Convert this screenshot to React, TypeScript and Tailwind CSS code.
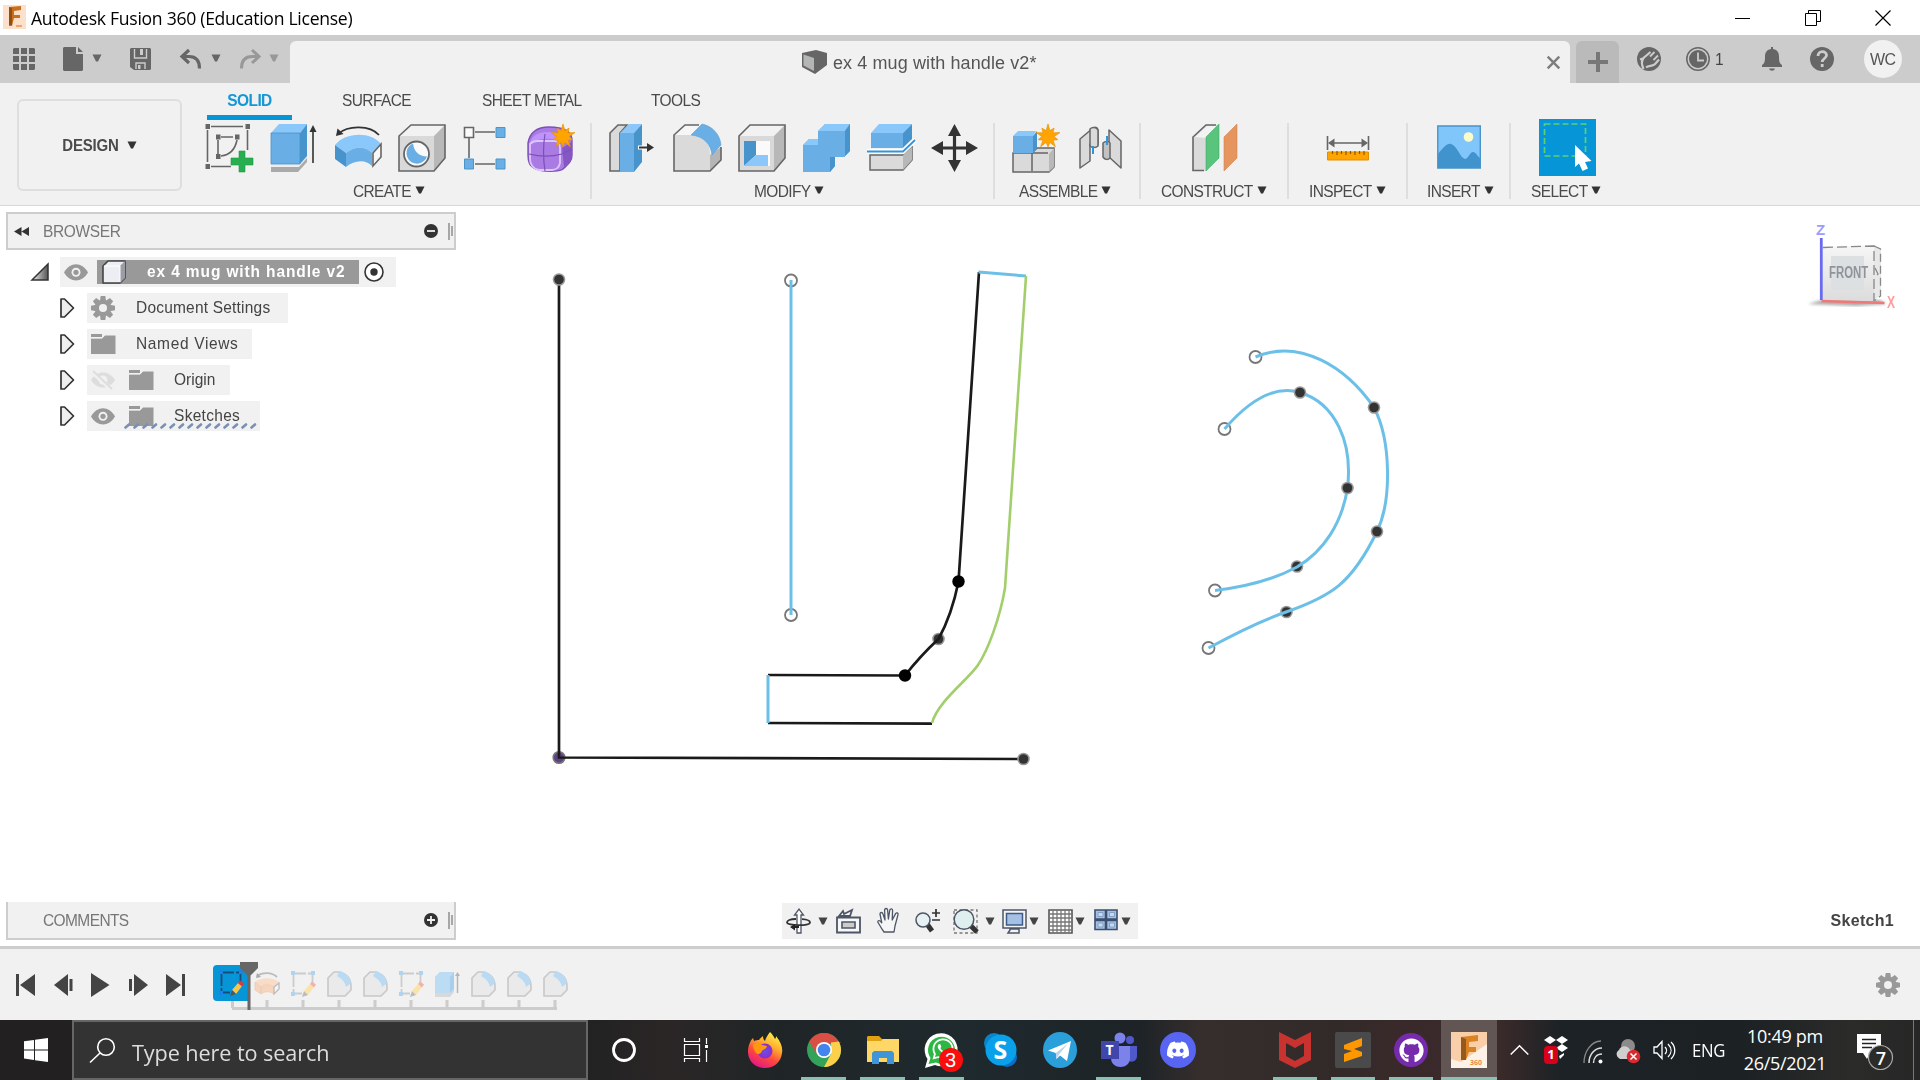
import React from "react";
import { FaDiscord, FaGithub, FaWhatsapp } from "react-icons/fa";

const B1 = "#69afe5";
const B2 = "#8ac7fa";
const B3 = "#4794cd";
const G = "#666";

type IconProps = { children: React.ReactNode; w?: number; h?: number; vb?: string; className?: string };

function Icon({ children, w = 48, h = 48, vb, className = "" }: IconProps) {
  return (
    <svg width={w} height={h} viewBox={vb ?? `0 0 ${w} ${h}`} fill="none" className={`block shrink-0 overflow-visible ${className}`}>
      {children}
    </svg>
  );
}

function Caret({ className = "text-[#333]" }: { className?: string }) {
  return (
    <svg width="10" height="8" viewBox="0 0 10 8" className={`block shrink-0 ${className}`}>
      <path d="M.5 .5h9L6 7.500H4z" fill="currentColor" />
    </svg>
  );
}

const Star = () => (
  <polygon
    transform="translate(36 12.5)"
    points={Array.from({ length: 20 }, (_, i) => {
      const r = i % 2 ? 6.2 : i % 4 ? 10.4 : 12.6;
      const a = (i * Math.PI) / 10 - Math.PI / 2;
      return `${(r * Math.cos(a)).toFixed(2)},${(r * Math.sin(a)).toFixed(2)}`;
    }).join(" ")}
    fill="#ffa400"
    stroke="#e08f00"
    strokeWidth=".6"
  />
);

const IconSketch = () => (
  <Icon>
    <g stroke={G} strokeWidth="1.6">
      <path d="M6 2.5h32M2.5 6v32M42.500 6v20M6 42.500h20M16 13h12M13 16v14M32 16c-2 10-7 15-16 16" />
    </g>
    <g fill={G}>
      <path d="M.5 0h4.500v5H.5zM40.500 0H45v5h-4.500zM.5 40H5v5H.5zM11 10.500h4.500v5H11zM30 10.500h4.500v5H30zM11 30h4.500v5H11z" />
    </g>
    <path d="M34 27h6v7h8v7h-8v7h-6v-7h-8v-7h8z" fill="#27ae50" stroke="#1e9a43" strokeWidth=".6" />
  </Icon>
);
const IconExtrude = () => (
  <Icon>
    <path d="M2 41h29l7-9v6l-9 10H2z" fill="#aaa" />
    <path d="M2 40h29l7-8v2L30 43H2z" fill="#eee" />
    <path d="M2 9L10 0h28l-7 9z" fill={B2} />
    <path d="M2 9h29v31H2z" fill={B1} stroke="#4c93ca" strokeWidth=".8" />
    <path d="M31 9l7-9v32l-7 8z" fill={B3} />
    <path d="M44 6v33" stroke="#333" strokeWidth="1.600" />
    <path d="M44 1l3.500 7h-7z" fill="#333" />
  </Icon>
);
const IconRevolve = () => (
  <Icon>
    <path d="M4 10C14 1 36 1 45 11" stroke="#333" strokeWidth="1.800" />
    <path d="M2 12l1.500-7.500 6 5.500z" fill="#333" />
    <path d="M1 21c10-13 36-14 46-1l-9 9c-6-7-18-7-26 0z" fill={B2} />
    <path d="M12 29c8-7 20-7 26 0v13c-6-7-18-6-26 1z" fill={B1} />
    <path d="M1 21l11 8v14L1 35z" fill={B3} />
    <path d="M39 29l8-9v13l-8 9z" fill="#f8f8f8" stroke={G} strokeWidth="1.600" />
  </Icon>
);
const IconHole = () => (
  <Icon>
    <path d="M1 12L13 1h34L36 12z" fill="#f2f2f2" />
    <path d="M36 12L47 1v33L36 47z" fill="#b8b8b8" />
    <path d="M1 12h35v35H1z" fill="#d9d9d9" />
    <path d="M1 12L13 1h34v33L36 47H1z" stroke={G} strokeWidth="1.600" />
    <circle cx="18.500" cy="30" r="12.500" fill="#fafafa" stroke={G} strokeWidth="1.800" />
    <path d="M15 19.500a10.500 10.500 0 1 0 14 13c-8 0-13-5-14-13z" fill={B1} />
  </Icon>
);
const IconPattern = () => (
  <Icon>
    <path d="M12 8h20M6 14v20M12 40h20" stroke={G} strokeWidth="1.600" />
    <path d="M1.500 3.500h9v10h-9z" fill="#fafafa" stroke={G} strokeWidth="1.600" />
    <path d="M33 3.500h9v10h-9zM1.500 35h9v10h-9zM33 35h9v10h-9z" fill={B1} stroke="#4c93ca" />
  </Icon>
);
const IconForm = () => (
  <Icon>
    <path d="M1 19C3 8 11 3 22 3c14 0 23 4 23 14v14c0 7-5 10-9 14-3 3-22 3-27 0-7-3-8-8-8-14z" fill="#a97be3" stroke="#7d50b8" strokeWidth="1.400" />
    <path d="M3 19c2-8 9-11 19-11 6 0 9 1 10 8-9-2-18-2-27 2z" fill="#bf93ff" />
    <path d="M3 20c3-3 5-3 7-3h18c4 0 5 3 5 7v15c-1 5-5 7-8 7H12c-6-1-9-6-9-11z" stroke="#dcc6ff" strokeWidth="1.800" />
    <path d="M35 24l10-6v13c0 6-4 8-8 12z" fill="#8657c4" />
    <path d="M18 10c-2 12-2 24 0 37M2 30c12 3 22 3 33 0l10-5" stroke="#7d50b8" strokeWidth="1.200" />
    <Star />
  </Icon>
);
const IconPress = () => (
  <Icon>
    <path d="M1 9L9 1h9l-7 8v38H1z" fill="#dadada" stroke={G} strokeWidth="1.600" />
    <path d="M11 9l9-9h13l-8 9z" fill={B2} />
    <path d="M11 9h14v39H11z" fill={B1} />
    <path d="M25 9l8-9v38l-8 10z" fill={B3} />
    <path d="M29 23.500h9" stroke="#fff" strokeWidth="4" />
    <path d="M30 23.500h9" stroke="#333" strokeWidth="2" />
    <path d="M38 19l7 4.500-7 4.500z" fill="#333" />
  </Icon>
);
const IconFillet = () => (
  <Icon>
    <path d="M1 11L12 1h15l-8 10z" fill="#f6f6f6" />
    <path d="M1 11h18c12 1 18 8 18 20v16H1z" fill="#dadada" />
    <path d="M37 31l11-8v13L37 47z" fill="#b5b5b5" />
    <path d="M26 1H12L1 11v36h36l11-11V23" stroke={G} strokeWidth="1.600" />
    <path d="M29 0c10 2 18 10 19 21l-9 10c-1-11-9-19-21-20z" fill={B1} stroke="#5aa0d6" strokeWidth=".6" />
  </Icon>
);
const IconShell = () => (
  <Icon>
    <path d="M1 12L12 1h35L36 12z" fill="#f2f2f2" />
    <path d="M36 12L47 1v33L36 47z" fill="#b8b8b8" />
    <path d="M1 12h35v35H1z" fill="#d9d9d9" />
    <path d="M1 12L12 1h35v33L36 47H1z" stroke={G} strokeWidth="1.600" />
    <path d="M6 17h26v25H6z" fill="#fafafa" />
    <path d="M6 17h12v14L6 42z" fill={B3} />
    <path d="M18 31h12v11H6z" fill={B2} />
  </Icon>
);
const IconCombine = () => (
  <Icon>
    <path d="M1 21l6-6h9V7l7-7h25v27l-6 6h-9v9l-5 6H1z" fill={B1} />
    <path d="M16 7l7-7h25l-5 7zM1 21l6-6h9v6z" fill={B2} />
    <path d="M43 7l5-7v27l-6 6h-9v9l-5 6V33h15z" fill={B3} />
  </Icon>
);
const IconSplit = () => (
  <Icon>
    <path d="M4 9l8-9h33l-9 9z" fill={B2} />
    <path d="M4 9h32v15H4z" fill={B1} />
    <path d="M36 9l9-9v15l-9 9z" fill={B3} />
    <path d="M3 31h33l9-8v13l-9 10H3z" fill="#dadada" stroke={G} strokeWidth="1.500" />
    <path d="M36 31l9-8v13l-9 10z" fill="#b8b8b8" />
    <path d="M0 27.500h36L48 16" stroke="#fff" strokeWidth="5" />
    <path d="M0 27.500h36L48 16" stroke="#2f95dc" strokeWidth="1.800" />
  </Icon>
);
const IconMove = () => (
  <Icon>
    <path d="M23.500 8v32M8 24h32" stroke="#333" strokeWidth="3.200" />
    <path d="M23.500 0l6.500 12H17zM23.500 48L30 36H17zM0 24l12-7v14zM47 24l-12-7v14z" fill="#333" />
  </Icon>
);
const IconNewComponent = () => (
  <Icon>
    <path d="M1 29h19l5-5h17v19l-5 5H1z" fill="#dadada" stroke={G} strokeWidth="1.500" />
    <path d="M37 30l5-6v19l-5 5z" fill="#b8b8b8" />
    <path d="M20 29v18M20 29h16" stroke={G} strokeWidth="1.500" />
    <path d="M1 12l5-5h18l-3 5z" fill={B2} />
    <path d="M1 12h20v17H1z" fill={B1} />
    <path d="M21 12l4-5v17l-4 5z" fill={B3} />
    <Star />
  </Icon>
);
const IconJoint = () => (
  <Icon className="ml-px">
    <g stroke={G} strokeWidth="1.500" strokeLinejoin="round">
      <path d="M3 15L16 4c3-2 5 0 5 3v13c0 3-8 3-8 0v17L3 44z" fill="#dadada" />
      <path d="M13 5v17c2 2 6 2 8 0V6c-2-3-6-3-8-1z" fill="#dadada" />
      <path d="M32 6l12 11v27L32 33z" fill="#dadada" />
      <path d="M26 19c2-2 6-2 7 0v15c-2 2-5 2-7-1z" fill="#c2c2c2" />
    </g>
    <path d="M16 22v8M30 12v9" stroke="#2f95dc" strokeWidth="2" />
  </Icon>
);
const IconConstruct = () => (
  <Icon>
    <path d="M1 13L14 1h11v4L14 15v32H1z" fill="#dadada" />
    <path d="M14 14L25 2H15L3 13z" fill="#f3f3f3" />
    <path d="M12 46.500H1V13L14 1h10" stroke={G} strokeWidth="1.600" />
    <path d="M14 13L27 0v34L14 47z" fill="#58c47c" stroke="#46ab69" strokeWidth=".6" />
    <path d="M32 13L45 0v34L32 47z" fill="#e6955f" stroke="#cf8350" strokeWidth=".6" />
  </Icon>
);
const IconInspect = () => (
  <Icon className="-ml-px">
    <path d="M3.500 12v14M44.500 12v14M8 19h32" stroke={G} strokeWidth="1.600" />
    <path d="M4 19l6.500-4.500v9zM44 19l-6.500-4.500v9z" fill={G} />
    <path d="M3.500 28h41v8h-41z" fill="#ffa400" stroke="#e08f00" />
    <path d="M8.500 27v3M13 27v4M17.500 27v3M22 27v4M26.500 27v3M31 27v4M35.500 27v3M40 27v4" stroke="#8a5a00" strokeWidth="1.200" />
  </Icon>
);
const IconInsert = () => (
  <Icon>
    <path d="M2.500 2h43v42h-43z" fill="#80c6fb" />
    <path d="M3 30C8 24 12 19 16 20c6 1 9 14 14 15 3 0 5-7 8-7s4 4 7 6v10H3z" fill="#4093cd" />
    <circle cx="33.500" cy="13" r="4.800" fill="#fdfcc8" />
    <path d="M2.800 2h42.500v42H2.800z" stroke="#4a93c8" strokeWidth="1.400" />
  </Icon>
);

const IconSelect = () => (
  <Icon w={57} h={57}>
    <path d="M0 0h57v57H0z" fill="#0696d7" />
    <path d="M5.500 5h41v32h-41z" stroke="#61cf73" strokeWidth="1.700" strokeDasharray="6 3" />
    <path d="M36 26v22l4-3.500 3.500 7.500 5.500-2.500-3-6.500 6.500-1z" fill="#fff" />
  </Icon>
);

type SectionProps = { label: string; w: string; iconPad: string; labelPad: string; sep?: boolean; children: React.ReactNode };
function Section({ label, w, iconPad, labelPad, sep = true, children }: SectionProps) {
  return (
    <div className={`flex h-[76px] shrink-0 flex-col justify-between ${w} ${sep ? "border-l-2 border-[#dedede]" : ""}`}>
      <div className={`flex h-[49px] items-end gap-[16.4px] ${iconPad}`}>{children}</div>
      <div className={`flex h-4 items-center gap-[4px] whitespace-nowrap text-[15.5px] leading-4 tracking-[-0.64px] text-[#4a4a4a] ${labelPad}`}>
        <span className="mt-px scale-y-[1.1]">{label}</span>
        <Caret className="-mt-[2px] text-[#333]" />
      </div>
    </div>
  );
}

function TitleBar() {
  return (
    <div className="flex h-[35px] shrink-0 items-center bg-white pl-[3px] text-black">
      <Icon w={23} h={24} className="-mt-px">
        <path d="M0 0h23v24H0z" fill="#fbe1cc" />
        <path d="M6 2l12-1v4l-7 1v4h6v3h-6l-2 8H6z" fill="#c96f1b" />
        <path d="M6 2l3 1v17H6z" fill="#8f4f16" />
        <path d="M13 20h6v2h-6z" fill="#f2a56a" />
      </Icon>
      <span className="ml-[5px] mt-px w-[330px] origin-left scale-x-[0.978] whitespace-nowrap font-['Open_Sans',sans-serif] text-[18px] leading-6 tracking-[-0.3px]">
        Autodesk Fusion 360 (Education License)
      </span>
      <div className="ml-auto flex items-center gap-[54px] pr-[29px]">
        <Icon w={16} h={16}><path d="M0 8.500h15" stroke="#000" /></Icon>
        <Icon w={16} h={16}><path d="M.5 3.500h11v12h-11zM3.500 3.500v-3h12v11h-4" stroke="#000" /></Icon>
        <Icon w={16} h={16}><path d="M.5.5l15 15M15.500.5l-15 15" stroke="#000" strokeWidth="1.200" /></Icon>
      </div>
    </div>
  );
}

function TabBar() {
  return (
    <div className="flex h-12 shrink-0 items-end bg-[#ccc]">
      <div className="flex h-12 w-[290px] items-center pl-[13px]">
        <Icon w={22} h={22}>
          <path d="M1 0h5v6H0V1zM8 0h6v6H8zM16 0h5l1 1v5h-6zM0 8h6v6H0zM8 8h6v6H8zM16 8h6v6h-6zM0 16h6v6H1l-1-1zM8 16h6v6H8zM16 16h6v5l-1 1h-5z" fill={G} />
        </Icon>
        <Icon w={20} h={24} className="ml-7">
          <path d="M1 0h12v7h7v16l-1 1H1l-1-1V1zM15 0l5 5h-5z" fill={G} />
        </Icon>
        <Caret className="-mt-[2px] ml-[9px] text-[#666]" />
        <Icon w={21} h={22} className="ml-7">
          <path d="M1 0h19l1 1v20l-1 1H4l-4-3V1z" fill={G} />
          <path d="M4.500 1v9h12V1M6 21v-6h9v6" stroke="#ccc" strokeWidth="1.400" />
          <path d="M10 1h3v6h-3zM8 17h2.500v4H8z" fill="#ccc" />
        </Icon>
        <Icon w={20} h={20} className="ml-[30px]">
          <path d="M8 1L1 7.500 8 14M1.500 7.500H8c7 0 10.500 4 10.500 12" stroke={G} strokeWidth="3.200" />
        </Icon>
        <Caret className="-mt-[2px] ml-[10px] text-[#666]" />
        <Icon w={20} h={20} className="ml-[19px]">
          <path d="M12 1l7 6.500-7 6.500M18.500 7.500H12c-7 0-10.500 4-10.500 12" stroke="#989898" strokeWidth="3" />
        </Icon>
        <Caret className="-mt-[2px] ml-[9px] text-[#989898]" />
      </div>
      <div className="flex h-[42px] w-[1280px] items-center rounded-t-md bg-[#f1f1f1] pl-[512px]">
        <Icon w={25} h={24} className="-mt-[1px]">
          <path d="M0 3L14 0l11 3v12l-12 9L0 17z" fill="#666" />
          <path d="M1.500 4.500L12 8v13L1.500 15.500z" fill="#b4b6b5" />
        </Icon>
        <span className="ml-[6px] mt-[2px] scale-y-[1.05] whitespace-nowrap text-[18px] tracking-[0.1px] text-[#555]">ex 4 mug with handle v2*</span>
        <Icon w={13} h={13} className="ml-auto mr-[10px]"><path d="M.7.7l11.600 11.600M12.300.7L.7 12.300" stroke="#7d7d7d" strokeWidth="2.400" /></Icon>
      </div>
      <div className="ml-[6px] flex h-[42px] w-[43px] items-center justify-center rounded-t-md bg-[#bababa]">
        <Icon w={20} h={20}><path d="M10 0v20M0 10h20" stroke="#777" strokeWidth="4" /></Icon>
      </div>
      <div className="flex h-12 flex-1 items-center pl-[18px]">
        <Icon w={24} h={24}>
          <circle cx="12" cy="12" r="12" fill={G} />
          <path d="M6.500 22c-2-5-2.500-8 .5-11.500l3-2.500 3.500-3M3 12.500l4-1.500M9 20.500c3-2.500 7.500-.5 10-4.500l3-3.500" stroke="#ccc" strokeWidth="2.200" />
          <path d="M13 9.500l4.500-4.500M16.500 13l4.500-4.500" stroke="#ccc" strokeWidth="1.800" />
        </Icon>
        <Icon w={24} h={24} className="ml-[25px]">
          <circle cx="12" cy="12" r="11.200" stroke={G} strokeWidth="1.500" />
          <circle cx="12" cy="12" r="9" fill={G} />
          <path d="M12 5.500v8h6" stroke="#ccc" strokeWidth="1.800" />
        </Icon>
        <span className="ml-[5px] mt-px scale-y-[1.08] text-[15.500px] text-[#444]">1</span>
        <Icon w={20} h={24} className="ml-[38px]">
          <path d="M9 0h2v2c5 1 6 4 6 8 0 5 1 7 3 8v2H0v-2c2-1 3-3 3-8 0-4 1-7 6-8zM7 21.500h6c-1 3-5 3-6 0z" fill={G} />
        </Icon>
        <Icon w={24} h={24} className="ml-7">
          <circle cx="12" cy="12" r="12" fill={G} />
          <path d="M8 9c0-6 8.500-5.500 8.500-.8 0 3.300-4.300 3.300-4.300 6.800M12.200 17v3" stroke="#ccc" strokeWidth="2.800" />
        </Icon>
        <div className="ml-[30px] flex size-[38px] items-center justify-center rounded-full bg-[#f1f1f1] pt-px text-[16px] tracking-[-0.7px] text-[#555]">
          <span className="scale-y-[1.06]">WC</span>
        </div>
      </div>
    </div>
  );
}

function Ribbon() {
  return (
    <div className="flex h-[123px] shrink-0 border-b border-[#d8d8d8] bg-[#f1f1f1]">
      <div className="w-[190px] pl-[17px] pt-4">
        <div className="flex h-[92px] w-[165px] items-center justify-center gap-2 rounded-md border-2 border-[#dedede] text-[15px] font-bold tracking-[-0.2px] text-[#4a4a4a]">
          <span className="scale-y-[1.12]">DESIGN</span>
          <Caret className="text-[#333]" />
        </div>
      </div>
      <div className="flex flex-1 flex-col">
        <div className="flex h-10 text-[15.500px] leading-[34px] tracking-[-0.6px] text-[#4a4a4a]">
          <div className="ml-[17px] h-[37px] w-[85px] border-b-[5px] border-[#0696d7] text-center font-bold text-[#1597d6]">
            <span className="inline-block scale-y-[1.1] leading-[32px]">SOLID</span>
          </div>
          <span className="ml-[50px] h-[34px] w-[140px] scale-y-[1.1]">SURFACE</span>
          <span className="h-[34px] w-[169px] scale-y-[1.1]">SHEET METAL</span>
          <span className="h-[34px] scale-y-[1.1]">TOOLS</span>
        </div>
        <div className="flex">
          <Section label="CREATE" w="w-[400px]" iconPad="pl-[15px]" labelPad="pl-[163px]" sep={false}>
            <IconSketch /><IconExtrude /><IconRevolve /><IconHole /><IconPattern /><IconForm />
          </Section>
          <Section label="MODIFY" w="w-[403px]" iconPad="pl-[17px]" labelPad="pl-[162px]">
            <IconPress /><IconFillet /><IconShell /><IconCombine /><IconSplit /><IconMove />
          </Section>
          <Section label="ASSEMBLE" w="w-[146px]" iconPad="pl-[17px]" labelPad="pl-[24px]">
            <IconNewComponent /><IconJoint />
          </Section>
          <Section label="CONSTRUCT" w="w-[148px]" iconPad="pl-[51px]" labelPad="pl-[20px]"><IconConstruct /></Section>
          <Section label="INSPECT" w="w-[119px]" iconPad="pl-[36px]" labelPad="pl-[20px]"><IconInspect /></Section>
          <Section label="INSERT" w="w-[103px]" iconPad="pl-[27px]" labelPad="pl-[19px]"><IconInsert /></Section>
          <Section label="SELECT" w="w-[120px]" iconPad="pl-[28px]" labelPad="pl-[20px]">
            <div className="-mb-1"><IconSelect /></div>
          </Section>
        </div>
      </div>
    </div>
  );
}

const Eye = () => (
  <Icon w={24} h={17}>
    <path d="M0 8.500C6-2.500 18-2.500 24 8.500 18 19 6 19 0 8.500z" fill="#999" />
    <circle cx="12" cy="8.300" r="4.500" fill="#f1f1f1" />
    <circle cx="12" cy="8.300" r="2.600" fill="#999" />
  </Icon>
);
const EyeOff = () => (
  <Icon w={24} h={20}>
    <path d="M0 10C6 0 18 0 24 10 18 20 6 20 0 10z" fill="#ddd" />
    <circle cx="12" cy="10" r="4.500" fill="#f1f1f1" />
    <path d="M0 1l22 20" stroke="#f1f1f1" strokeWidth="4" />
    <path d="M2 1l19 18" stroke="#ddd" strokeWidth="1.800" />
  </Icon>
);
const Folder = () => (
  <Icon w={25} h={20}>
    <path d="M0 0h11v3H0zM0 4.500h11l3-3h10.500V20H0z" fill="#999" />
    <path d="M0 3.800h11l2.500-2.500" stroke="#f1f1f1" strokeWidth="1" />
  </Icon>
);
function Gear({ r = 12 }: { r?: number }) {
  return (
    <svg width={r * 2} height={r * 2} viewBox="-12 -12 24 24" className="block shrink-0">
      {[0, 45, 90, 135].map((a) => (
        <path key={a} d="M-2.300-12h4.600l.6 4v16l-.6 4h-4.600l-.6-4v-16z" transform={`rotate(${a})`} fill="#999" />
      ))}
      <circle r="8.200" fill="#999" />
      <circle r="4" fill="#f1f1f1" />
    </svg>
  );
}
const Expand = () => (
  <Icon w={15} h={20}><path d="M1 1h3.500l9 9-9 9H1z" fill="#eee" stroke="#333" strokeWidth="1.700" strokeLinejoin="round" /></Icon>
);

function TreeRow({ w, children }: { w: string; children: React.ReactNode }) {
  return (
    <div className="flex h-9 items-center pl-[54px]">
      <Expand />
      <div className={`relative ml-[12px] flex h-[30px] items-center bg-[#f1f1f1] pl-1 ${w}`}>{children}</div>
    </div>
  );
}

function PanelBar({ title, plus }: { title: string; plus?: boolean }) {
  return (
    <div className={`flex h-[38px] w-[450px] items-center border-2 border-[#cdcdcd] bg-[#f1f1f1] pl-[6px] ${plus ? "border-t-0" : ""}`}>
      <Icon w={15} h={9} className="mt-px">
        {!plus && <path d="M7.500 0v9L0 4.500zM15 0v9L7.500 4.500z" fill="#333" />}
      </Icon>
      <span className={`ml-[14px] mr-auto scale-y-[1.1] text-[15.500px] text-[#777] ${plus ? "tracking-[-0.6px]" : "tracking-[-0.35px]"}`}>{title}</span>
      <Icon w={14} h={14}>
        <circle cx="7" cy="7" r="7" fill="#333" />
        <path d={plus ? "M3 7h8M7 3v8" : "M3 7h8"} stroke="#f1f1f1" strokeWidth="1.800" />
      </Icon>
      <Icon w={5} h={17} className="ml-[10px] mr-[1px]"><path d="M1 0v17M4 3v10" stroke="#888" strokeWidth="1.400" /></Icon>
    </div>
  );
}

function Browser() {
  return (
    <div className="flex w-[462px] flex-col pl-[6px] pt-[6px] text-[15.500px] text-[#444]">
      <PanelBar title="BROWSER" />
      <div className="mt-[7px] flex h-[30px] items-center pl-[25px]">
        <Icon w={18} h={18}>
          <defs><linearGradient id="tri" x1="0" y1="1" x2="1" y2="1"><stop stopColor="#eee" /><stop offset="1" stopColor="#555" /></linearGradient></defs>
          <path d="M1 17L17 1v16z" fill="url(#tri)" stroke="#333" strokeWidth="1.500" />
        </Icon>
        <div className="ml-[11px] flex h-[30px] w-[336px] items-center bg-[#f1f1f1] pl-[4px]">
          <Eye />
          <div className="ml-[9px] flex h-6 w-[262px] items-center bg-[#999] pl-[5px]">
            <Icon w={24} h={24}>
              <path d="M1 6l5-5h17v17l-5 5H1z" fill="#eceef3" stroke="#444" strokeWidth="1.600" strokeLinejoin="round" />
              <path d="M18 6l5-5v17l-5 5z" fill="#9a9ca6" />
              <path d="M2 6h16v16" stroke="#fff" />
            </Icon>
            <span className="ml-[21px] scale-y-[1.06] whitespace-nowrap font-bold tracking-[0.88px] text-white">ex 4 mug with handle v2</span>
          </div>
          <Icon w={20} h={20} className="ml-[5px]">
            <circle cx="10" cy="10" r="9" fill="#fff" stroke="#333" strokeWidth="1.600" />
            <circle cx="10" cy="10" r="3.700" fill="#333" />
          </Icon>
        </div>
      </div>
      <div className="mt-[3px] flex flex-col">
        <TreeRow w="w-[201px]"><Gear /><span className="ml-[21px] scale-y-[1.08] tracking-[0.2px]">Document Settings</span></TreeRow>
        <TreeRow w="w-[165px]"><Folder /><span className="ml-[20px] scale-y-[1.08] tracking-[0.65px]">Named Views</span></TreeRow>
        <TreeRow w="w-[143px]"><EyeOff /><div className="ml-[14px]"><Folder /></div><span className="ml-[20px] scale-y-[1.08]">Origin</span></TreeRow>
        <TreeRow w="w-[173px]">
          <Eye /><div className="ml-[14px]"><Folder /></div><span className="ml-[20px] scale-y-[1.08] tracking-[0.3px]">Sketches</span>
          <svg width="134" height="7" className="absolute left-[37px] top-[21px]">
            {Array.from({ length: 15 }, (_, i) => (
              <path key={i} d={`M${i * 9 + 1.5} 5.500l3.500-3`} stroke="#7990b5" strokeWidth="2.600" strokeLinecap="round" />
            ))}
          </svg>
        </TreeRow>
      </div>
    </div>
  );
}

const OPEN: number[][] = [[791, 280.5], [791, 615], [1255.500, 357], [1224.500, 429], [1215, 590.5], [1208.500, 648]];
const UNDER: number[][] = [[1297, 566.5], [1286.500, 612], [938.5, 639]];
const OVER: number[][] = [[559, 279.500], [1023.500, 759], [1300, 392.5], [1374, 407.5], [1347.500, 488], [1377, 531.5]];
const SOLID: number[][] = [[958.500, 581.5], [905, 675.5]];

const Dot = ({ x, y }: { x: number; y: number }) => (
  <g>
    <circle cx={x} cy={y} r="6.300" fill="#999" />
    <circle cx={x} cy={y} r="4.800" fill="#333" />
  </g>
);

function Drawing() {
  return (
    <svg width="1920" height="740" viewBox="0 206 1920 740" fill="none" className="absolute inset-0">
      {OPEN.map(([x, y]) => <circle key={`${x}-${y}`} cx={x} cy={y} r="6" fill="#fff" stroke="#777" strokeWidth="1.800" />)}
      {UNDER.map(([x, y]) => <Dot key={x} x={x} y={y} />)}
      <g stroke="#1a1a1a" strokeWidth="2.700">
        <circle cx="559" cy="757.500" r="5.800" fill="#5c4384" stroke="#777" strokeWidth="1.600" />
        <path d="M559 280v477.500L1023 759M979 272l-20.500 309.500c-4 20-12 43-20 57.500-13 12-23 23-33.500 36.500L768 675M768 723l164 .7" />
      </g>
      <g stroke="#6cc0e8" strokeWidth="3">
        <path d="M791 280v335M768 675v48M978.500 272l47.500 4" />
        <path d="M1255.500 357C1300 338 1346 367 1374 407.500C1391 440 1392 500 1377 531.500C1352 583 1332 596 1286 612C1260 621 1236 633 1208.500 648" />
        <path d="M1224.500 429C1246 404 1272 384 1300 392.500C1335 403 1353 442 1347.500 488C1342 523 1324 551 1297 567C1273 580 1244 587 1215 590.500" />
      </g>
      <path d="M1026 276l-21 312C1000 618 988 650 978 665C968 680 938 701 932 723" stroke="#a3ce6c" strokeWidth="2.600" />
      {OVER.map(([x, y]) => <Dot key={x} x={x} y={y} />)}
      {SOLID.map(([x, y]) => <circle key={x} cx={x} cy={y} r="6.200" fill="#000" />)}
    </svg>
  );
}

function ViewCube() {
  return (
    <div className="absolute left-[1805px] top-[14px] h-[100px] w-[95px]">
      <svg width="95" height="100" viewBox="1805 220 95 100" fill="none" className="absolute inset-0">
        <defs>
          <linearGradient id="face" x1="0" y1="0" x2="0" y2="1"><stop stopColor="#f6f6f6" /><stop offset="1" stopColor="#dcdcdc" /></linearGradient>
          <filter id="soft"><feGaussianBlur stdDeviation="1.500" /></filter>
        </defs>
        <path d="M1808 304l14-4h58l6 4-30 2z" fill="#aaa" filter="url(#soft)" />
        <path d="M1822 247l52-2v56l-52-1z" fill="url(#face)" />
        <path d="M1874 245l7 4v46l-7 6z" fill="#e8e8e8" />
        <path d="M1831 256h33v34h-33z" fill="#dde0e3" />
        <path d="M1823 247.500l51-1.500v55" stroke="#888" strokeWidth="1.300" strokeDasharray="10 4" />
        <path d="M1874 246l6.500 3v47l-6.500 5M1875 268l3 6-3 4" stroke="#888" strokeWidth="1.300" strokeDasharray="8 4" />
        <path d="M1821.500 301l63 2" stroke="#f07878" strokeWidth="2.600" />
        <path d="M1821.300 238v62" stroke="#6a6af0" strokeWidth="2.800" />
      </svg>
      <span className="absolute left-[11px] top-0 text-[15px] font-bold leading-5 text-[#9c9cff]">Z</span>
      <span className="absolute left-[24px] top-[43px] origin-left scale-x-[0.71] text-[16px] font-bold leading-5 text-[#8f9499]">FRONT</span>
      <span className="absolute left-[82px] top-[73px] origin-left scale-x-75 text-[16px] font-bold leading-5 text-[#ff9c9c]">X</span>
    </div>
  );
}

function NavBar() {
  const S = "#4d5566";
  return (
    <div className="flex h-9 w-[356px] items-center bg-[#f1f1f1] pl-1">
      <Icon w={25} h={25}>
        <path d="M11 24V6H8.500L13 0l4.500 6H15v18z" fill="#fff" stroke={S} strokeWidth="1.300" />
        <path d="M10 10C4 10 1 11.500 1 13.500c0 3 23 4 23 0 0-2-4-3-8-3.300" stroke="#333" strokeWidth="1.800" />
        <path d="M4 18l5-3v2h4v2H9v2.500z" fill="#222" />
      </Icon>
      <Caret className="ml-[7px] text-[#444]" />
      <Icon w={25} h={25} className="ml-[8px]">
        <path d="M1 8.500h23v15H1zM3 7l4-5 1 3 8-4-2 6z" fill="#f8f8f8" stroke={S} strokeWidth="1.800" />
        <path d="M6 13h13v6H6z" fill="#ccc" stroke={S} strokeWidth="1.600" />
      </Icon>
      <Icon w={24} h={26} className="ml-[16px]">
        <path d="M7 24C4 20 2 16 .8 14c0-2 2-2 4 .8L3 6c0-2 2.400-2 3 0l2 6-.4-10c.4-2 2.600-2 3 0l.8 9 1.400-9c.6-1.600 2.800-1.400 2.800.4L15.200 12l3.400-6.400c1-1.400 3-.6 2.400 1L18 18l-1 6z" fill="#f6f6f6" stroke={S} strokeWidth="1.300" strokeLinejoin="round" />
      </Icon>
      <Icon w={25} h={25} className="ml-[14px]">
        <path d="M12 15l5 7" stroke="#333" strokeWidth="5" />
        <circle cx="8" cy="11" r="7" fill="#e6f1f4" stroke={S} strokeWidth="1.500" />
        <path d="M21 0v8M17 4h8M17 11h8" stroke="#333" strokeWidth="1.700" />
      </Icon>
      <Icon w={25} h={25} className="ml-[13px]">
        <path d="M1 1h23v23H1z" stroke="#777" strokeWidth="1.300" strokeDasharray="3 2.500" />
        <path d="M18 17l6 6" stroke="#333" strokeWidth="5" />
        <circle cx="11" cy="10.500" r="9.800" fill="#dfeeee" stroke={S} strokeWidth="1.500" />
      </Icon>
      <Caret className="ml-[7px] text-[#444]" />
      <Icon w={25} h={25} className="ml-[7px]">
        <path d="M1 1h23v18H1zM8 20h9v4H6l2-3z" fill="#f4f4f4" stroke={S} strokeWidth="1.500" />
        <path d="M4.500 4.500h16v11.500h-16z" fill="#a4c0e2" stroke="#3d5a8a" strokeWidth="1.500" />
      </Icon>
      <Caret className="ml-[2px] text-[#444]" />
      <Icon w={25} h={25} className="ml-[9px]">
        <path d="M1 1h23v23H1z" fill="#fff" stroke="#555" strokeWidth="1.600" />
        <path d="M1 5h23M1 9h23M1 13h23M1 17h23M1 21h23M5 1v23M9 1v23M13 1v23M17 1v23M21 1v23" stroke="#777" strokeWidth="1.300" />
      </Icon>
      <Caret className="ml-[2px] text-[#444]" />
      <Icon w={24} h={24} className="-mt-[2px] ml-[9px]">
        <path d="M1 2h10.500v9H1zM12.500 2H23v9H12.500zM1 12.500h10.500v9H1zM12.500 12.500H23v9H12.500z" fill="#a4c0e2" stroke="#3d4f70" strokeWidth="1.600" />
        <path d="M4 4.500h5v4H4zM15.500 4.500h5v4h-5zM4 15h5v4H4zM15.500 15h5v4h-5z" fill="#c8d9ee" stroke="#7594bf" strokeWidth=".8" />
      </Icon>
      <Caret className="ml-[3px] text-[#444]" />
    </div>
  );
}

function Canvas() {
  return (
    <div className="relative flex h-[740px] shrink-0 flex-col justify-between bg-white">
      <Drawing />
      <ViewCube />
      <div className="relative"><Browser /></div>
      <div className="relative flex h-[44px] items-start">
        <div className="pl-[6px]"><PanelBar title="COMMENTS" plus /></div>
        <div className="ml-[326px] mt-px"><NavBar /></div>
        <span className="ml-auto mr-[26px] mt-[9px] scale-y-[1.05] text-[16px] font-bold leading-5 tracking-[0.3px] text-[#444]">Sketch1</span>
      </div>
    </div>
  );
}

const MiniSketch = ({ active }: { active?: boolean }) => (
  <Icon w={24} h={26}>
    <path d="M3 2.500h18M2.500 4v18M21.500 4v9M4 22.500h7" stroke={active ? "#1a4c7a" : "#ccc"} strokeWidth="1.800" strokeDasharray="12 2" />
    <path d="M0 0h4v4H0zM20 0h4v4h-4zM0 21h4v4H0z" fill={active ? "#1d82e8" : "#aed4f2"} />
    <path d="M13 20l6-7 4 3-6 8z" fill={active ? "#f7c548" : "#fae3a8"} />
    <path d="M19 13l2-2.500 4 3-2 3z" fill={active ? "#e0393f" : "#f3b0b0"} />
    <path d="M13 20l4 4-6 2z" fill={active ? "#555" : "#bbb"} />
  </Icon>
);
const MiniFillet = () => (
  <Icon w={24} h={26}>
    <path d="M1 7l6-6h5c8 2 12 7 12 14v4l-6 6H1z" fill="#eaeaea" stroke="#c8c8c8" strokeWidth="1.600" />
    <path d="M13 0c6 2 10 6 11 12l-5 4c-1-5-4-8-9-11z" fill="#b9daf2" />
  </Icon>
);
const MiniRevolve = () => (
  <Icon w={24} h={26}>
    <path d="M2 5c5-4 15-4 20 1" stroke="#bbb" strokeWidth="1.800" />
    <path d="M1 7l1-5 4 4z" fill="#aaa" />
    <path d="M0 11c6-5 18-5 24 0l-5 5c-4-3-9-3-13 0z" fill="#f9dcc8" />
    <path d="M6 16c4-3 9-3 13 0v7c-4-3-9-3-13 0zM0 11l6 5v7l-6-4z" fill="#f6d5be" stroke="#eccbb4" strokeWidth=".8" />
    <path d="M19 16l5-4v6l-5 5z" fill="#f5f5f5" stroke="#bbb" strokeWidth="1.300" />
  </Icon>
);
const MiniExtrude = () => (
  <Icon w={24} h={26}>
    <path d="M0 6l5-5h14v20l-4 5H0z" fill="#d9d9d9" />
    <path d="M0 6l5-5h14v17l-4 4H0z" fill="#bcdcf4" />
    <path d="M15 6l4-5v17l-4 4z" fill="#a9cfec" />
    <path d="M22.500 3v19" stroke="#b5b5b5" strokeWidth="1.500" />
    <path d="M20 5l2.500-4L25 5z" fill="#b5b5b5" />
  </Icon>
);

function Timeline() {
  const items = [MiniRevolve, MiniSketch, MiniFillet, MiniFillet, MiniSketch, MiniExtrude, MiniFillet, MiniFillet, MiniFillet];
  return (
    <div className="flex h-[74px] shrink-0 items-start border-t-[3px] border-[#cdcdcd] bg-[#f1f1f1] pl-4">
      <div className="mt-6 flex gap-[18.600px]">
        <Icon w={19} h={24}><path d="M0 1h3v22H0zM19 1v22L4 12z" fill="#444" /></Icon>
        <Icon w={19} h={24}><path d="M0 12L14 1v22zM15.500 6h3v12h-3z" fill="#444" /></Icon>
        <Icon w={19} h={24}><path d="M0 0l18.500 12L0 24z" fill="#444" /></Icon>
        <Icon w={19} h={24}><path d="M5 1v22l14-11zM0 6h3v12H0z" fill="#444" /></Icon>
        <Icon w={19} h={24}><path d="M16 1h3v22h-3zM0 1l15 11L0 23z" fill="#444" /></Icon>
      </div>
      <div className="relative ml-[27.600px] mt-4 flex h-[46px] items-start">
        <svg width="346" height="12" className="absolute left-0 top-[34px]" fill="none">
          <path d="M19.500 0v9M19 9.500h325M54 1v8M90 1v8M126 1v8M162 1v8M198 1v8M234 1v8M270 1v8M306 1v8M342 1v8" stroke="#ccc" strokeWidth="3" />
        </svg>
        <div className="relative flex h-9 w-9 items-center justify-center rounded-l bg-[#0696d7]"><MiniSketch active /></div>
        <div className="relative ml-[6px] mt-[6px] flex gap-3">
          {items.map((Item, i) => <Item key={i} />)}
        </div>
        <svg width="18" height="48" className="absolute -top-[3px] left-[27px]">
          <path d="M0 0h18v6l-7.500 7.500V48h-3V13.500L0 6z" fill="#666" />
        </svg>
      </div>
      <div className="ml-auto mr-5 mt-6"><Gear /></div>
    </div>
  );
}

type TaskItemProps = { w?: string; open?: boolean; children: React.ReactNode; bar?: string; active?: boolean };
function TaskItem({ w = "w-[59px]", open, children, bar = "w-[45px]", active }: TaskItemProps) {
  return (
    <div className={`flex h-[60px] shrink-0 flex-col items-center ${w} ${active ? "bg-[#625655]" : ""}`}>
      <div className="flex h-[57px] items-center justify-center pt-[3px]">{children}</div>
      {open && <div className={`h-[3px] bg-[#8cbfb1] ${bar}`} />}
    </div>
  );
}

function Taskbar() {
  return (
    <div className="flex h-[60px] shrink-0 items-center bg-[linear-gradient(90deg,#222021_0,#222223_590px,#2b2626_670px,#1f2527_780px,#1f2a2e_960px,#1d2327_1140px,#362e2d_1200px,#322a29_1340px,#3a292a_1400px,#3a2a2a_1500px,#1d2226_1560px,#1c2124_1740px,#2b2b29_1850px,#262626_1920px)] font-['Open_Sans',sans-serif] text-white">
      <div className="flex w-[72px] justify-center">
        <Icon w={24} h={24}><path d="M0 3.300l10-1.400v9.500H0zM11 1.800L24 0v11.400H11zM0 12.400h10v9.500L0 20.500zM11 12.400h13V24l-13-1.800z" fill="#fff" /></Icon>
      </div>
      <div className="flex h-[60px] w-[516px] items-center border-2 border-[#666] bg-[#333] pl-4">
        <Icon w={25} h={25}><circle cx="16" cy="9" r="8.300" stroke="#fff" strokeWidth="1.600" /><path d="M10 15L0 24.500" stroke="#fff" strokeWidth="1.600" /></Icon>
        <span className="ml-[17px] mt-1 origin-left scale-x-[0.985] whitespace-nowrap text-[22px] tracking-[-0.1px] text-[#ddd]">Type here to search</span>
      </div>
      <div className="flex w-[72px] justify-center"><Icon w={24} h={24}><circle cx="12" cy="12" r="10.500" stroke="#fff" strokeWidth="2.800" /></Icon></div>
      <div className="flex w-[73px] justify-center">
        <Icon w={25} h={24}><path d="M.5 0v3.500h15V0M.5 6.500h15v11H.5zM.5 24v-3.500h15V24M22.500 0v6M22.500 12v12" stroke="#fff" strokeWidth="1.200" /><path d="M21 7h3v3h-3z" fill="#fff" /></Icon>
      </div>
      <div className="flex w-[472px] pl-[2px]">
        <TaskItem>
          <Icon w={34} h={36}>
            <defs>
              <linearGradient id="ff" x1=".8" y1="0" x2=".3" y2="1"><stop stopColor="#fff44f" /><stop offset=".35" stopColor="#ffb02e" /><stop offset=".65" stopColor="#ff4a3d" /><stop offset="1" stopColor="#e31587" /></linearGradient>
              <radialGradient id="ffp"><stop stopColor="#6a4de8" /><stop offset="1" stopColor="#8b2fc9" /></radialGradient>
            </defs>
            <path d="M22 0c3 3 4 5 5 7 1-1 1-2 1-3 5 6 7 12 6 17-1 9-8 15-17 15C7 36 0 29 0 20 0 14 2 9 5 6l1 3c2-1 4-1 5-1 1-2 3-3 4-4 0 3 1 4 2 5 1-4 3-6 5-9z" fill="url(#ff)" />
            <circle cx="17" cy="19" r="7.500" fill="url(#ffp)" />
            <path d="M5 13c3-3 6-3 9 0l5 1c-1 4-4 3-5 5-1 3-4 4-6 2-2-3-3-5-3-8z" fill="#ff980e" />
          </Icon>
        </TaskItem>
        <TaskItem open>
          <Icon w={34} h={36} vb="-17 -18 34 36">
            <circle r="17" fill="#34a35a" />
            <path d="M-14.700-8.500A17 17 0 0 1 14.700-8.500L17-7H0L-7.500 4z" fill="#d94f43" />
            <path d="M14.700-8.500A17 17 0 0 1 0 17l7-13V-7.500z" fill="#fdd04b" />
            <circle r="8" fill="#fff" /><circle r="6.300" fill="#4484ee" />
          </Icon>
        </TaskItem>
        <TaskItem open>
          <Icon w={32} h={28}>
            <path d="M0 1l1-1h11l3 3h16l1 1v10H0z" fill="#e0a211" />
            <path d="M0 5h14l2-2h16v23H0z" fill="#ffd766" />
            <path d="M5 28V17l2-2h18l2 2v11h-7v-6h-8v6z" fill="#3f95d8" />
          </Icon>
        </TaskItem>
        <TaskItem open>
          <div className="relative">
            <Icon w={34} h={36}>
              <path d="M0 36l2.500-9A16.500 16.500 0 1 1 10 33z" fill="#fff" />
              <path d="M3.500 32l2-6A13.500 13.500 0 1 1 11 30.500z" fill="#2cb742" />
            </Icon>
            <FaWhatsapp className="absolute left-[6px] top-[5px] size-[24px] text-white" />
            <span className="absolute left-[14px] top-[16px] flex size-6 items-center justify-center rounded-full bg-[#f90d0d] font-['Liberation_Sans',sans-serif] text-[20px] leading-none">3</span>
          </div>
        </TaskItem>
        <TaskItem>
          <div className="relative">
            <Icon w={34} h={36}>
              <circle cx="10" cy="11" r="10" fill="#0a84c9" /><circle cx="23" cy="25" r="10" fill="#0a6fc9" /><circle cx="17" cy="18" r="15.500" fill="#0aa1ea" />
            </Icon>
            <span className="absolute inset-0 flex items-center justify-center pb-0.5 text-[25px] font-bold leading-none">S</span>
          </div>
        </TaskItem>
        <TaskItem>
          <Icon w={34} h={36}>
            <ellipse cx="17" cy="18" rx="17" ry="18" fill="#2a9fd9" />
            <path d="M5 18.500L28 9l-4 20-7-5.500-3.500 3.500-.7-6z" fill="#fff" /><path d="M12.800 21L25 11.500l-9 11-2.500 4.500z" fill="#b9d5e8" />
          </Icon>
        </TaskItem>
        <TaskItem open>
          <div className="relative">
            <Icon w={36} h={36}>
              <circle cx="29" cy="8" r="4" fill="#5059c9" /><path d="M25 14h11v10c0 4-4 7-8 5z" fill="#5059c9" />
              <circle cx="19" cy="6" r="5.500" fill="#7b83eb" /><path d="M10 14h19v12c0 12-19 12-19 0z" fill="#7b83eb" />
              <path d="M0 9h18v18H0z" fill="#4046ab" />
            </Icon>
            <span className="absolute left-0 top-[9px] w-[18px] text-center text-[14px] font-bold leading-[18px]">T</span>
          </div>
        </TaskItem>
        <TaskItem>
          <div className="flex size-9 items-center justify-center rounded-full bg-[#5865f2]"><FaDiscord className="size-[24px]" /></div>
        </TaskItem>
      </div>
      <div className="ml-[61px] flex">
        <TaskItem w="w-[58px]" bar="w-[44px]" open>
          <Icon w={32} h={36}><path d="M0 0l16 8L32 0v28l-16 8-16-8zM7 11v13l9 5 9-5V11l-9 5z" fill="#c8332f" fillRule="evenodd" /></Icon>
        </TaskItem>
        <TaskItem w="w-[58px]" bar="w-[44px]" open>
          <Icon w={36} h={36}><rect width="36" height="36" rx="2" fill="#4a4a4a" /><path d="M9 13l18-7v8l-8 3 8 3v4L9 30v-8l8-3-8-2z" fill="#ff9800" /></Icon>
        </TaskItem>
        <TaskItem w="w-[58px]" bar="w-[44px]" open>
          <div className="flex h-[34px] w-[34px] items-center justify-center rounded-full bg-[#752bab]"><FaGithub className="size-[25px]" /></div>
        </TaskItem>
        <TaskItem w="w-[56px] ml-[1px]" bar="w-[56px]" open active>
          <div className="relative">
            <Icon w={36} h={36}>
              <path d="M0 0h36v36H0z" fill="#fdf2e8" /><path d="M0 0h36v12L10 30 0 27z" fill="#f8cfa9" />
              <path d="M10 5l17-2v6l-9 1v5h7v5h-7l-3 8h-5z" fill="#d98324" /><path d="M10 5l5 2v21h-5z" fill="#96581c" />
            </Icon>
            <span className="absolute right-[5px] bottom-0 text-[7px] font-bold leading-[10px] text-[#e98a3c]">360</span>
          </div>
        </TaskItem>
      </div>
      <Icon w={19} h={10} className="ml-[13px]"><path d="M.7 9.500L9.500.8l8.800 8.700" stroke="#fff" strokeWidth="1.500" /></Icon>
      <div className="relative ml-[15px]">
        <Icon w={24} h={28}><path d="M6 0l6 4-6 4-6-4zM18 0l6 4-6 4-6-4zM18 8l6 4-6 4-6-4zM15 20l5-3v2l-4 4z" fill="#fff" /></Icon>
        <span className="absolute left-0 top-[10px] flex h-[18px] w-[14px] items-center justify-center rounded-sm bg-[#d9001b] text-[13px] font-bold">1</span>
      </div>
      <Icon w={18} h={24} className="ml-4 mt-1">
        <path d="M0 23C0 12 7 1 17 1" stroke="#888" strokeWidth="1.300" /><path d="M5 23c0-8 5-15 13-15M9.500 23c0-5 3-9 8.500-9" stroke="#ddd" strokeWidth="1.500" /><circle cx="16.500" cy="21.500" r="2" fill="#fff" />
      </Icon>
      <Icon w={24} h={26} className="ml-[14px] mt-1">
        <circle cx="12" cy="7" r="7" fill="#8b8b8b" /><path d="M4 20a5 5 0 0 1-1-9c2-5 9-5 11 0 7-2 9 9 2 9z" fill="#cfcfcf" />
        <circle cx="17.500" cy="17.500" r="6.800" fill="#d92a2f" /><path d="M14.500 14.500l6 6M20.500 14.500l-6 6" stroke="#fff" strokeWidth="1.500" />
      </Icon>
      <Icon w={22} h={20} className="ml-[13px]">
        <path d="M1 7h3l5-5.500v17L4 13H1zM12 7c2 2 2 5 0 7M15 4c4 4 4 9 0 13M18 2c5 5 5 12 0 17" stroke="#fff" strokeWidth="1.300" />
      </Icon>
      <span className="ml-[17px] mt-px w-[34px] origin-left scale-x-[0.93] text-[18px] tracking-[-0.4px]">ENG</span>
      <div className="ml-[16px] flex w-[86px] flex-col items-center whitespace-nowrap text-[18px] leading-[27px] tracking-[-0.3px]">
        <span>10:49 pm</span>
        <span>26/5/2021</span>
      </div>
      <div className="relative ml-[29px] mt-1">
        <Icon w={36} h={36}>
          <path d="M0 0h24v19H13l-3 6-4-6H0z" fill="#fff" /><path d="M5 5.500h14M5 9.500h14M5 13.500h10" stroke="#222" strokeWidth="1.400" />
          <circle cx="23.500" cy="23.500" r="12" fill="#2b2b2a" stroke="#aaa" strokeWidth="1.200" />
        </Icon>
        <span className="absolute left-[12px] top-[12px] flex size-6 items-center justify-center text-[18px] font-semibold">7</span>
      </div>
      <div className="ml-auto mr-[6px] h-[60px] w-px bg-[#777]" />
    </div>
  );
}

export default function App() {
  return (
    <div className="flex h-[1080px] w-[1920px] flex-col overflow-hidden bg-white font-['Liberation_Sans',Arial,sans-serif]">
      <TitleBar />
      <TabBar />
      <Ribbon />
      <Canvas />
      <Timeline />
      <Taskbar />
    </div>
  );
}
